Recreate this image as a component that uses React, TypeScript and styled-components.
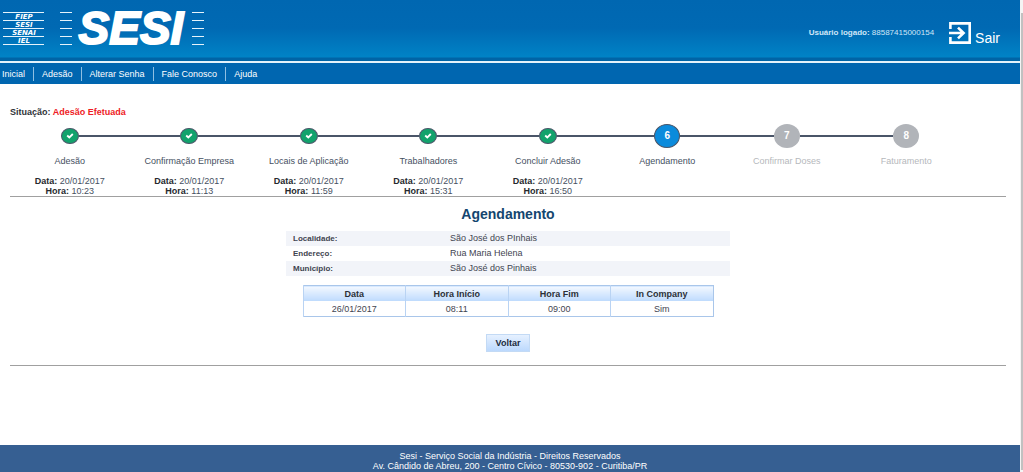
import React from "react";
import styled, { createGlobalStyle } from "styled-components";

const GlobalStyle = createGlobalStyle`
  * { box-sizing: border-box; }
  body {
    margin: 0;
    background: #fff;
    color: #3f4450;
    font: 9px/10px "Liberation Sans", Arial, sans-serif;
  }
`;

const Shell = styled.div`
  display: flex;
  min-height: 100vh;
`;

const Page = styled.div`
  flex: 1;
  min-width: 0;
  display: flex;
  flex-direction: column;
`;

const ScrollTrack = styled.div`
  width: 3px;
  padding: 13px 0 2px 1px;
  background: #f4f4f4;
  display: flex;

  &::before {
    content: "";
    flex: 1;
    background: #c1c1c1;
  }
`;

const Header = styled.header`
  display: flex;
  justify-content: space-between;
  height: 63px;
  padding: 0 20px 0 0;
  background: linear-gradient(#0067b1 0, #0069b3 28px, #0083c6 57px, #0064a6 58px, #0064a6 61px, #e4f2fb 61px);
`;

const Account = styled.div`
  display: flex;
  align-items: center;
  gap: 15px;
  height: 66px;
  color: #cfe6f7;
  font-size: 8px;
`;

const Exit = styled.a`
  display: flex;
  align-items: center;
  gap: 4px;
  color: #fff;
  font-size: 14px;
  line-height: 16px;
  text-decoration: none;

  span { padding-top: 10px; }
`;

const Menu = styled.nav`
  display: flex;
  align-items: center;
  height: 21px;
  background: #0066b0;
`;

const MenuLink = styled.a`
  padding: 2px 8px;
  border-left: 1px solid #8fbfe2;
  color: #fff;
  text-decoration: none;

  &:first-child {
    padding-left: 2px;
    border-left: 0;
  }
`;

const Main = styled.main`
  flex: 1;
  display: flex;
  flex-direction: column;
  align-items: center;
  padding: 23px 14px 24px 10px;
`;

const Status = styled.p`
  align-self: stretch;
  margin: 0;
  font-weight: bold;
  color: #2f3338;

  span { color: #ee1c25; }
`;

const Steps = styled.ol`
  align-self: flex-start;
  display: flex;
  width: 96%;
  margin: 0;
  padding: 6px 0 0;
  list-style: none;
`;

const Step = styled.li<{ $muted: boolean }>`
  flex: 1 1 0;
  min-width: 0;
  text-align: center;
  color: ${(p) => (p.$muted ? "#b5b8bc" : "#46505f")};

  &:first-child > div::before,
  &:last-child > div::after {
    visibility: hidden;
  }
`;

const Track = styled.div`
  display: flex;
  align-items: center;
  height: 26px;
  margin-bottom: 7px;

  &::before,
  &::after {
    content: "";
    flex: 1;
    height: 2px;
    background: #4a5568;
  }
`;

type Kind = "done" | "current" | "next";
const fills: Record<Kind, string> = { done: "#12a26c", current: "#0b8bdc", next: "#b1b4b9" };

const Dot = styled.span<{ $kind: Kind }>`
  display: flex;
  align-items: center;
  justify-content: center;
  width: ${(p) => (p.$kind === "done" ? 18 : 26)}px;
  height: ${(p) => (p.$kind === "done" ? 16 : 24)}px;
  border: ${(p) => (p.$kind === "next" ? "0" : "1px solid #4a5568")};
  border-radius: 50%;
  background: ${(p) => fills[p.$kind]};
  color: #fff;
  font-size: 10px;
  font-weight: bold;
`;

const When = styled.p`
  margin: 10px 0 0;

  b { color: #26292e; }
`;

const Rule = styled.hr`
  align-self: stretch;
  margin: 0;
  border: 0;
  border-top: 1px solid #a0a0a0;
`;

const Title = styled.h1`
  margin: 9px 0;
  color: #14466f;
  font-size: 14px;
  line-height: 16px;
`;

const Details = styled.table`
  width: 444px;
  max-width: 100%;
  border-collapse: collapse;

  tr:nth-child(odd) { background: #f2f4f9; }

  th {
    width: 164px;
    padding: 2px 7px;
    text-align: left;
    font-size: 8px;
  }

  td { padding: 2px 0 3px; }
`;

const Schedule = styled.table`
  width: 411px;
  max-width: 100%;
  margin: 9px 0 17px;
  table-layout: fixed;
  border-collapse: collapse;
  border: 1px solid #a9c6ea;
  text-align: center;

  th, td {
    padding: 3px 0 2px;
    border-left: 1px solid #b9d3f3;
  }

  th {
    color: #2b3038;
    background: linear-gradient(#f3f8ff, #bddafd);
  }
`;

const BackButton = styled.button`
  padding: 3px 9px;
  border: 1px solid #c3daf5;
  background: linear-gradient(#e6f1ff, #bcd9fd);
  color: #1c2b40;
  font: bold 9px/10px "Liberation Sans", Arial, sans-serif;
  margin-bottom: 13px;
`;

const Footer = styled.footer`
  height: 27px;
  padding-top: 6px;
  background: #365f92;
  color: #fff;
  text-align: center;
`;

const lineYs = [12, 20, 28, 36, 44];

const Logo = () => (
  <svg width="210" height="57" viewBox="0 0 210 57" role="img" aria-label="FIEP SESI SENAI IEL">
    <g stroke="#e6f3fb" strokeWidth="1.2">
      {lineYs.map((y) => (
        <path key={y} d={`M3 ${y + 0.5}H44M60 ${y + 0.5}H72M192 ${y + 0.5}H204`} />
      ))}
    </g>
    <g fill="#fff" fontWeight="bold" fontStyle="italic" textAnchor="middle">
      <g fontFamily="'DejaVu Sans', sans-serif" fontSize="7">
        {["FIEP", "SESI", "SENAI", "IEL"].map((name, i) => (
          <text key={name} x="24" y={19 + i * 8}>{name}</text>
        ))}
      </g>
      <text x="131" y="44" fontFamily="'Liberation Sans', Arial, sans-serif" fontSize="46" stroke="#fff" strokeWidth="2">
        SESI
      </text>
    </g>
  </svg>
);

const ExitIcon = () => (
  <svg width="22" height="23" viewBox="0 0 22 23" fill="none" stroke="#fff" strokeWidth="2.6" aria-hidden="true">
    <path d="M1.4 7V1.4H20.7V20.6H1.4V15M0 11H14M9 5.6L14.6 11L9 16.4" />
  </svg>
);

const Check = () => (
  <svg width="8" height="6" viewBox="0 0 8 6" fill="none" stroke="#fff" strokeWidth="1.8" aria-label="Concluído">
    <path d="M1.2 2.5L3.3 4.5L6.8 1" />
  </svg>
);

const steps: { name: string; kind: Kind; time?: string }[] = [
  { name: "Adesão", kind: "done", time: "10:23" },
  { name: "Confirmação Empresa", kind: "done", time: "11:13" },
  { name: "Locais de Aplicação", kind: "done", time: "11:59" },
  { name: "Trabalhadores", kind: "done", time: "15:31" },
  { name: "Concluir Adesão", kind: "done", time: "16:50" },
  { name: "Agendamento", kind: "current" },
  { name: "Confirmar Doses", kind: "next" },
  { name: "Faturamento", kind: "next" },
];

const details = [
  ["Localidade:", "São José dos PInhais"],
  ["Endereço:", "Rua Maria Helena"],
  ["Município:", "São José dos Pinhais"],
];

export default function App() {
  return (
    <>
      <GlobalStyle />
      <Shell>
        <Page>
          <Header>
            <Logo />
            <Account>
              <span><b>Usuário logado:</b> 88587415000154</span>
              <Exit href="#sair"><ExitIcon /><span>Sair</span></Exit>
            </Account>
          </Header>
          <Menu>
            {["Inicial", "Adesão", "Alterar Senha", "Fale Conosco", "Ajuda"].map((item) => (
              <MenuLink key={item} href="#menu">{item}</MenuLink>
            ))}
          </Menu>
          <Main>
            <Status>Situação: <span>Adesão Efetuada</span></Status>
            <Steps>
              {steps.map((s, i) => (
                <Step key={s.name} $muted={s.kind === "next"}>
                  <Track>
                    <Dot $kind={s.kind}>{s.kind === "done" ? <Check /> : i + 1}</Dot>
                  </Track>
                  {s.name}
                  {s.time && (
                    <When>
                      <b>Data:</b> 20/01/2017<br />
                      <b>Hora:</b> {s.time}
                    </When>
                  )}
                </Step>
              ))}
            </Steps>
            <Rule />
            <Title>Agendamento</Title>
            <Details>
              <tbody>
                {details.map(([label, value]) => (
                  <tr key={label}>
                    <th scope="row">{label}</th>
                    <td>{value}</td>
                  </tr>
                ))}
              </tbody>
            </Details>
            <Schedule>
              <thead>
                <tr>
                  {["Data", "Hora Início", "Hora Fim", "In Company"].map((h) => (
                    <th key={h} scope="col">{h}</th>
                  ))}
                </tr>
              </thead>
              <tbody>
                <tr>
                  {["26/01/2017", "08:11", "09:00", "Sim"].map((v) => (
                    <td key={v}>{v}</td>
                  ))}
                </tr>
              </tbody>
            </Schedule>
            <BackButton type="button">Voltar</BackButton>
            <Rule />
          </Main>
          <Footer>
            Sesi - Serviço Social da Indústria - Direitos Reservados<br />
            Av. Cândido de Abreu, 200 - Centro Cívico - 80530-902 - Curitiba/PR
          </Footer>
        </Page>
        <ScrollTrack />
      </Shell>
    </>
  );
}
